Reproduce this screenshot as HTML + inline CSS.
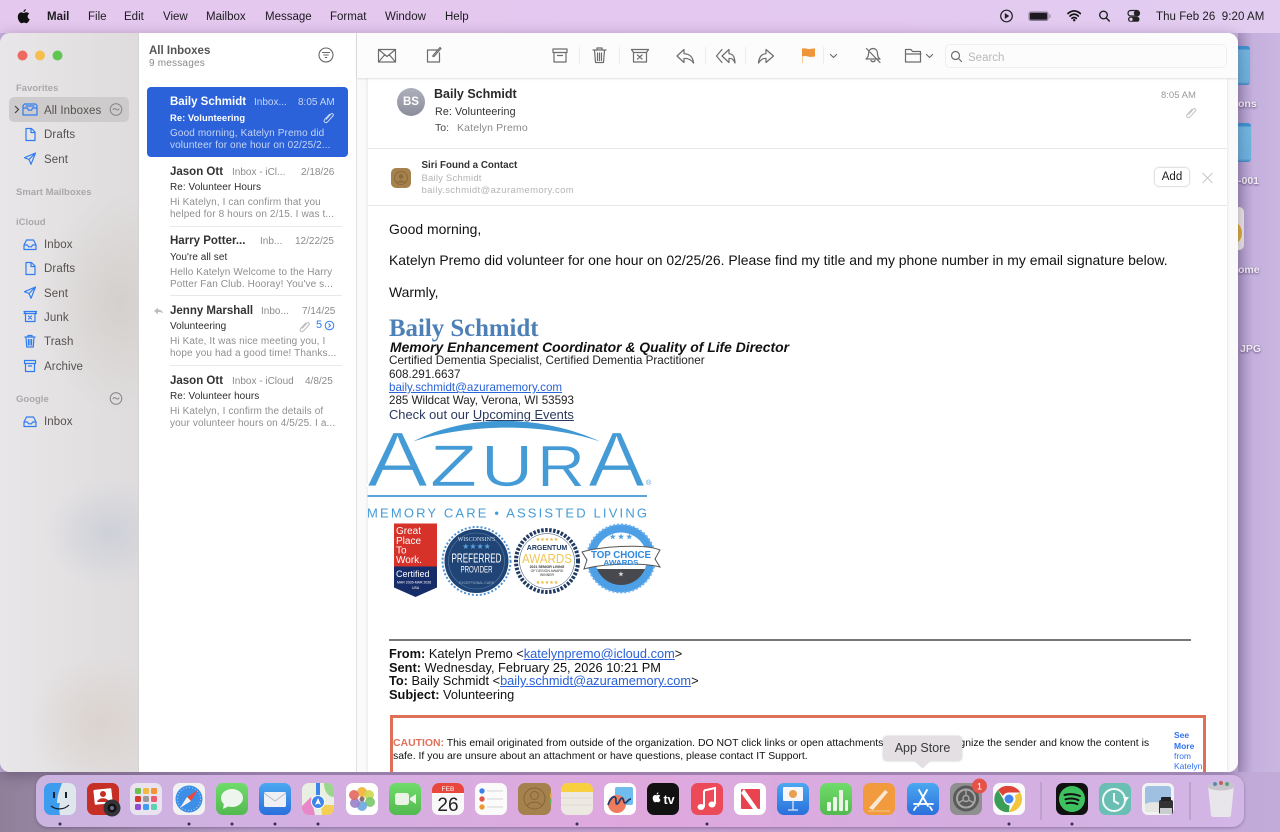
<!DOCTYPE html>
<html><head><meta charset="utf-8"><title>Mail</title>
<style>
html{background:#c8b3de}
html,body{margin:0;padding:0;width:1280px;height:832px;overflow:hidden;font-family:"Liberation Sans",sans-serif}
#root{position:absolute;left:0;top:0;width:1280px;height:832px;overflow:hidden;background:#c8b3de;filter:blur(.3px)}
.t{position:absolute;white-space:nowrap;line-height:14px;height:14px}
.abs{position:absolute}
svg{position:absolute;overflow:visible}
#menu .t{font-size:11.5px;color:#1c1a20;top:10px}
#side .t{font-size:11.5px;color:#55514f;left:44px;letter-spacing:.1px;margin-top:1px}
#side .h{font-size:9.5px;font-weight:bold;color:#aaa8a8;left:16px;letter-spacing:0}
.n{font-size:11.5px;font-weight:bold;color:#333;left:170px;margin-top:1px}
.b{font-size:10px;color:#8b8b8b;margin-top:2px}
.d{font-size:10px;color:#8b8b8b;margin-top:2px}
.s{font-size:10px;color:#2c2c2c;left:170px;letter-spacing:.05px;margin-top:3px}
.p{font-size:10px;color:#8f8f8f;left:170px;letter-spacing:.12px;margin-top:3px}
.sel{color:#fff}.sel2{color:#c5d5f5}
.m{color:#111}
a{color:#2a62d9;text-decoration:underline}
.sep{position:absolute;left:170px;width:172px;height:1px;background:#e8e8e8}
.side-i{fill:none;stroke:#2f7cf2;stroke-width:1.2;stroke-linejoin:round;stroke-linecap:round}
.tb{fill:none;stroke:#6c6c6c;stroke-width:1.2;stroke-linejoin:round;stroke-linecap:round}
.dl{position:absolute;color:#f0ecf4;font-size:10.5px;font-weight:bold;text-shadow:0 1px 2px rgba(60,40,80,.7);white-space:nowrap}
</style></head>
<body>
<div id="root">
<!-- wallpaper -->
<div class="abs" style="left:1238px;top:24px;width:42px;height:808px;background:linear-gradient(90deg,#a995c2,#c5b0dd 35%,#cbb6e2)"></div>
<div class="abs" style="left:0;top:772px;width:1280px;height:60px;background:linear-gradient(90deg,#8f8098,#b79dc8 20%,#c39fd0 60%,#c2abd8)"></div>
<!-- desktop icons -->
<div class="abs" style="left:1225px;top:46px;width:25px;height:39px;border-radius:3px;background:linear-gradient(#3f93cf 0 3px,#72b6e0 4px,#6cb1dc 92%,#3f86bf)"></div>
<div class="abs" style="left:1225px;top:123px;width:26px;height:39px;border-radius:3px;background:linear-gradient(#3f93cf 0 3px,#72b6e0 4px,#6cb1dc 92%,#3f86bf)"></div>
<div class="abs" style="left:1225px;top:207px;width:19px;height:43px;border-radius:5px;background:#ece8e6"></div>
<div class="abs" style="left:1225px;top:220px;width:17px;height:26px;border-radius:0 13px 13px 0;background:#dcae3e"></div>
<div class="dl" style="left:1238px;top:98px">ons</div>
<div class="dl" style="left:1238px;top:175px">-001</div>
<div class="dl" style="left:1238px;top:264px">ome</div>
<div class="dl" style="left:1240px;top:343px">JPG</div>
<!-- menu bar -->
<div id="menu" class="abs" style="left:0;top:0;width:1280px;height:33px;background:linear-gradient(90deg,#e5c8ee,#e3c8ef 70%,#e2cdf0)">
<svg style="left:17px;top:9px" width="13" height="15" viewBox="0 0 13 15"><path fill="#111" d="M9 .3C8.9 1.6 7.7 3 6.4 3 6.3 1.700 7.600.4 9 .3zM6.500 4c.7 0 1.600-.8 2.900-.8 1 0 2.100.5 2.800 1.500-2.300 1.400-2 4.500.5 5.600-.6 1.500-1.900 3.900-3.300 3.900-.9 0-1.300-.6-2.400-.6-1.100 0-1.600.6-2.400.6C2.900 14.200.8 10.900.8 8 .8 5 2.700 3.300 4.400 3.300c.9 0 1.600.7 2.100.7z"/></svg>
<div class="t" style="left:47px;font-weight:bold">Mail</div>
<div class="t" style="left:88px">File</div>
<div class="t" style="left:124px">Edit</div>
<div class="t" style="left:163px">View</div>
<div class="t" style="left:206px">Mailbox</div>
<div class="t" style="left:265px">Message</div>
<div class="t" style="left:330px">Format</div>
<div class="t" style="left:385px">Window</div>
<div class="t" style="left:445px">Help</div>
<svg style="left:0;top:0" width="1280" height="33">
<circle cx="1006.500" cy="16" r="5.800" fill="none" stroke="#222" stroke-width="1.200"/><path d="M1004.800 13v6l4.500-3z" fill="#222"/>
<rect x="1028.500" y="11.500" width="20" height="9.500" rx="2.500" fill="#8a7a96"/><rect x="1030" y="13" width="17" height="6.500" rx="1.300" fill="#1c1a20"/><rect x="1049.500" y="14.500" width="1" height="3.500" fill="#8a7a96"/>
<path d="M1068 13.500c3.800-3.400 8.500-3.400 12.300 0M1070 16c2.600-2.300 5.700-2.300 8.300 0M1072 18.300c1.400-1.100 2.900-1.100 4.300 0" fill="none" stroke="#111" stroke-width="1.700" stroke-linecap="round"/><circle cx="1074.200" cy="20.200" r="1.200" fill="#111"/>
<circle cx="1103.500" cy="15" r="3.800" fill="none" stroke="#222" stroke-width="1.400"/><path d="M1106.300 18l3 3" stroke="#222" stroke-width="1.500" stroke-linecap="round"/>
<rect x="1128" y="10.500" width="11.500" height="5.500" rx="2.700" fill="none" stroke="#222" stroke-width="1.200"/><circle cx="1136.500" cy="13.200" r="2.700" fill="#222"/>
<rect x="1128" y="16.800" width="11.500" height="5" rx="2.500" fill="#222"/><circle cx="1131" cy="19.300" r="1.700" fill="#e3c9ee"/>
</svg>
<div class="t" style="left:1156px;letter-spacing:.05px">Thu Feb 26&nbsp;&nbsp;9:20 AM</div>
</div>
<!-- window -->
<div class="abs" style="left:0;top:33px;width:1238px;height:739px;border-radius:10px;overflow:hidden;background:#fff;box-shadow:0 3px 14px rgba(40,20,60,.35)">
 <div style="position:absolute;left:0;top:0;right:0;bottom:0;transform:translateY(-33px)">
 <!-- sidebar -->
 <div class="abs" style="left:0;top:33px;width:138px;height:739px;background:radial-gradient(ellipse 65px 55px at 110px 500px,#ced1d8 0,rgba(206,209,216,0) 100%),radial-gradient(ellipse 70px 70px at 100px 690px,#dad3ce 0,rgba(218,211,206,0) 100%),radial-gradient(ellipse 80px 110px at 120px 270px,#d4d0cd 0,rgba(212,208,205,0) 100%),linear-gradient(90deg,#e8e6e8,#dfdcdd)"></div>
 <div id="side" class="abs" style="left:0;top:0;width:138px;height:772px">
  <div class="abs" style="left:9px;top:97px;width:120px;height:25px;border-radius:5px;background:#cdcbcb"></div>
  <svg style="left:0;top:0" width="138" height="500">
   <circle cx="22.500" cy="55.500" r="5" fill="#ec6a5e"/><circle cx="40" cy="55.500" r="5" fill="#f4bf4f"/><circle cx="57.500" cy="55.500" r="5" fill="#61c554"/>
   <path d="M15 106l3.500 3.500-3.500 3.500" fill="none" stroke="#444" stroke-width="1.200"/>
   <g class="side-i">
    <path d="M24.500 104h11l1.500 1.500v9.500h-14v-9.500zM24 108h3.500l1 2.200h3l1-2.200h4M26 106h8"/>
    <path d="M26 128.500h5.500l3.500 3.500v8.500h-9zM31 128.500v4h4"/>
    <path d="M35.500 153l-11 4.700 4.500 1.800 2 4.800zM29 159.500l6.500-6.500"/>
    <path d="M24 245l2.500-5h7l2.500 5v4.500h-12zM24 245h3.500l1 1.800h3l1-1.800H36"/>
    <path d="M26 262.500h5.500l3.500 3.500v8.500h-9zM31 262.500v4h4"/>
    <path d="M35.500 287l-11 4.700 4.500 1.800 2 4.800zM29 293.500l6.500-6.500"/>
    <path d="M24 311.500h12.500l-1.500 2v8h-9.500v-8zM28.500 316l3 3M31.500 316l-3 3M24 313.500h12.500"/>
    <path d="M25 337h10M28 337v-1.500h4V337M26 337l.700 10h6.600l.700-10M28.400 339.500v5.500M30 339.500v5.500M31.600 339.500v5.500"/>
    <path d="M24.500 360.500h11v3h-11zM25.500 363.500v8h9v-8M28.500 366h3"/>
    <path d="M24 422l2.500-5h7l2.500 5v4.500h-12zM24 422h3.500l1 1.800h3l1-1.800H36"/>
   </g>
   <g fill="none" stroke="#8d8b8b" stroke-width="1.100">
    <circle cx="116" cy="109.500" r="5.800"/><path d="M112.800 110c1-1.800 2-1.800 3.200-.7s2.200 1 3.200-.6"/>
    <circle cx="116" cy="398.500" r="5.800"/><path d="M112.800 399c1-1.800 2-1.800 3.200-.7s2.200 1 3.200-.6"/>
   </g>
  </svg>
  <div class="t h" style="top:81px">Favorites</div>
  <div class="t" style="top:103px">All Inboxes</div>
  <div class="t" style="top:127px">Drafts</div>
  <div class="t" style="top:152px">Sent</div>
  <div class="t h" style="top:185px">Smart Mailboxes</div>
  <div class="t h" style="top:215px">iCloud</div>
  <div class="t" style="top:237px">Inbox</div>
  <div class="t" style="top:261px">Drafts</div>
  <div class="t" style="top:286px">Sent</div>
  <div class="t" style="top:310px">Junk</div>
  <div class="t" style="top:334px">Trash</div>
  <div class="t" style="top:359px">Archive</div>
  <div class="t h" style="top:392px">Google</div>
  <div class="t" style="top:414px">Inbox</div>
 </div>
 <!-- list -->
 <div class="abs" style="left:138px;top:33px;width:219px;height:739px;background:#fff;border-left:1px solid #d4d2d2;border-right:1px solid #e2e2e2;box-sizing:border-box"></div>
 <div class="t" style="left:149px;top:44px;font-size:11.500px;font-weight:bold;color:#555">All Inboxes</div>
 <div class="t" style="left:149px;top:57px;font-size:10px;color:#8a8a8a;letter-spacing:.2px">9 messages</div>
 <svg style="left:0;top:0" width="360" height="60"><circle cx="326" cy="55" r="7" fill="none" stroke="#666" stroke-width="1.100"/><path d="M322 52.500h8M323.300 55h5.400M324.800 57.500h2.400" stroke="#666" stroke-width="1.100"/></svg>
 <div class="abs" style="left:147px;top:87px;width:200.500px;height:69.500px;border-radius:4px;background:#2b62d9"></div>
 <div class="t n sel" style="top:94px">Baily Schmidt</div>
 <div class="t b sel2" style="left:254px;top:94px">Inbox...</div>
 <div class="t d sel2" style="left:298px;top:94px">8:05 AM</div>
 <div class="t s sel" style="top:108px;font-weight:bold;font-size:9.400px">Re: Volunteering</div>
 <div class="t p sel2" style="top:124px">Good morning, Katelyn Premo did</div>
 <div class="t p sel2" style="top:136px">volunteer for one hour on 02/25/2...</div>
 <svg style="left:0;top:0" width="360" height="360"><g fill="none" stroke-width="1"><path stroke="#c5d5f5" d="M326 119.500l5-5.500c1.300-1.300 3.200.5 2 1.900l-5.500 6c-2 2-4.600-.5-2.700-2.600l5-5.300"/><path stroke="#bbb" d="M302 328.500l5-5.500c1.300-1.300 3.200.5 2 1.900l-5.500 6c-2 2-4.600-.5-2.700-2.600l5-5.300"/></g>
 <path d="M154 311l4-3.200v2c3 0 4.500 1.200 5 3.700-1.300-1.300-2.800-1.600-5-1.500v2.200z" fill="#bdbdbd"/>
 <circle cx="329.500" cy="325.500" r="4.300" fill="none" stroke="#2f7cf2"/><path d="M328.500 323.500l2 2-2 2" fill="none" stroke="#2f7cf2"/></svg>

 <div class="t n" style="top:164px">Jason Ott</div>
 <div class="t b" style="left:232px;top:164px">Inbox - iCl...</div>
 <div class="t d" style="left:301px;top:164px">2/18/26</div>
 <div class="t s" style="top:178px">Re: Volunteer Hours</div>
 <div class="t p" style="top:193px">Hi Katelyn, I can confirm that you</div>
 <div class="t p" style="top:205px">helped for 8 hours on 2/15. I was t...</div>
 <div class="sep" style="top:226px"></div>

 <div class="t n" style="top:233px">Harry Potter...</div>
 <div class="t b" style="left:260px;top:233px">Inb...</div>
 <div class="t d" style="left:295px;top:233px">12/22/25</div>
 <div class="t s" style="top:248px">You're all set</div>
 <div class="t p" style="top:263px">Hello Katelyn Welcome to the Harry</div>
 <div class="t p" style="top:275px">Potter Fan Club. Hooray! You've s...</div>
 <div class="sep" style="top:295px"></div>

 <div class="t n" style="top:303px">Jenny Marshall</div>
 <div class="t b" style="left:261px;top:303px">Inbo...</div>
 <div class="t d" style="left:302px;top:303px">7/14/25</div>
 <div class="t s" style="top:317px">Volunteering</div>
 <div class="t" style="left:316px;top:318px;font-size:11px;color:#2f7cf2">5</div>
 <div class="t p" style="top:332px">Hi Kate, It was nice meeting you, I</div>
 <div class="t p" style="top:344px">hope you had a good time! Thanks...</div>
 <div class="sep" style="top:365px"></div>

 <div class="t n" style="top:373px">Jason Ott</div>
 <div class="t b" style="left:232px;top:373px">Inbox - iCloud</div>
 <div class="t d" style="left:305px;top:373px">4/8/25</div>
 <div class="t s" style="top:387px">Re: Volunteer hours</div>
 <div class="t p" style="top:402px">Hi Katelyn, I confirm the details of</div>
 <div class="t p" style="top:414px">your volunteer hours on 4/5/25. I a...</div>

 <!-- message pane -->
 <div class="abs" style="left:357px;top:78px;width:881px;height:694px;background:#fafafa"></div>
 <div class="abs" style="left:368px;top:78px;width:859px;height:694px;background:#fff;box-shadow:0 0 3px rgba(0,0,0,.12)"></div>
 <div class="abs" style="left:357px;top:33px;width:881px;height:45px;background:#fcfcfc;box-shadow:0 1px 2px rgba(0,0,0,.12)"></div>
 <div class="abs" style="left:945px;top:44px;width:282px;height:24px;box-sizing:border-box;border:1px solid #efefef;border-radius:5px;background:#fcfcfc"></div>
 <svg style="left:0;top:0" width="1238" height="80">
  <g class="tb">
   <path d="M378.500 49.500h17v12.500h-17zM378.500 49.500l8.500 7 8.500-7M378.500 62l6-7M395.500 62l-6-7"/>
   <path d="M437.500 50h-10v12h12v-9M433 56.500l1 0 7-8-1-1-7 8z"/>
   <path d="M553 49h14v3.500h-14zM554 52.500V62h12v-9.500M557.500 55.500h5"/>
   <path d="M593 50h13M597 50v-2h5v2M594.500 50l1 12.500h8l1-12.500M597.500 53v7.500M599.500 53v7.500M601.500 53v7.500"/>
   <path d="M631.500 49.500h17l-2 3v9.500h-13v-9.500zM633.500 52.500h13M637.500 55l4.500 4M642 55l-4.500 4"/>
   <path d="M684 49.500l-7 6.500 7 6.500v-4c4-.3 7 .7 9.500 4.500-.5-5.500-3.500-9-9.500-9.300z"/>
   <path d="M722 49.500l-5.500 6.500 5.500 6.500M729 49.500l-7 6.500 7 6.500v-4c3-.3 4.500.7 6 4.500-.3-5.500-1.500-9-6-9.300z"/>
   <path d="M766 49.500l7.500 6.500-7.500 6.500v-4c-3-.3-5 .7-7.500 4.500.5-5.500 2.500-9 7.500-9.300z"/>
   <path d="M830.500 54.500l3 3 3-3M926.500 54.500l3 3 3-3"/>
   <path d="M873 48.500c-3 0-4.500 2.500-4.500 5 0 3-1 4.500-2.500 5.500h14c-1.500-1-2.500-2.500-2.500-5.500 0-2.500-1.500-5-4.500-5zM871 60.500c.5 1.500 3.500 1.500 4 0M866.500 48.500l13.500 14"/>
   <path d="M905.500 62V49.500h5.500l1.500 2h8V62zM905.500 54h15.500"/>
   <circle cx="955.500" cy="55.500" r="4"/><path d="M958.500 58.500l3 3"/>
  </g>
  <path d="M802 48.500c3-1 6 1 8 .5 1.500-.3 3-.5 5-.5v8c-3 .5-5 .6-7 0-2-.6-4-.8-5.500-.2V63H802z" fill="#f0963a"/>
  <g stroke="#ececec"><path d="M579.500 47v17M619.500 47v17M705.500 47v17M745.500 47v17M823.500 47v17"/></g>
 </svg>
 <div class="t" style="left:968px;top:51px;font-size:11.500px;color:#b9b9b9">Search</div>

 <div class="abs" style="left:397px;top:88px;width:28px;height:28px;border-radius:50%;background:linear-gradient(#aeb0bb,#8b8d9b);color:#fff;font-weight:bold;font-size:11.500px;line-height:28px;text-align:center">BS</div>
 <div class="t" style="left:434px;top:87px;font-size:12.500px;font-weight:bold;color:#2a2a2a">Baily Schmidt</div>
 <div class="t" style="left:435px;top:105px;font-size:10.700px;color:#333;letter-spacing:.1px">Re: Volunteering</div>
 <div class="t" style="left:435px;top:121px;font-size:10.500px;color:#444">To:</div>
 <div class="t" style="left:457px;top:121px;font-size:10.500px;color:#8a8a8a;letter-spacing:.15px">Katelyn Premo</div>
 <div class="t" style="left:1161px;top:89px;font-size:9.500px;color:#999">8:05 AM</div>
 <svg style="left:0;top:0" width="1238" height="210"><path fill="none" stroke="#c4c4c4" d="M1188.500 114.500l5-5.500c1.300-1.300 3.200.5 2 1.900l-5.500 6c-2 2-4.600-.5-2.700-2.600l5-5.300"/>
  <path d="M1202.500 173l10 10M1212.500 173l-10 10" stroke="#c8c8c8" stroke-width="1"/></svg>
 <div class="abs" style="left:368px;top:148px;width:859px;height:1px;background:#e6e6e6"></div>
 <div class="abs" style="left:368px;top:205px;width:859px;height:1px;background:#e6e6e6"></div>
 <div class="abs" style="left:391px;top:168px;width:20px;height:20px;border-radius:5px;background:#a5814d"></div>
 <svg style="left:0;top:0" width="420" height="200"><circle cx="401" cy="178" r="6.500" fill="none" stroke="#8a6a3c"/><circle cx="401" cy="176.500" r="2.200" fill="#8a6a3c"/><path d="M396.500 182.500c2-2.500 7-2.500 9 0" fill="#8a6a3c"/></svg>
 <div class="t" style="left:421.500px;top:159px;font-size:9.800px;font-weight:bold;color:#333">Siri Found a Contact</div>
 <div class="t" style="left:421.500px;top:172px;font-size:9.500px;color:#b4b4b4;letter-spacing:.2px">Baily Schmidt</div>
 <div class="t" style="left:421.500px;top:184px;font-size:9.500px;color:#b4b4b4;letter-spacing:.37px">baily.schmidt@azuramemory.com</div>
 <div class="abs" style="left:1155px;top:168px;width:34px;height:18px;border-radius:4px;background:#fff;box-shadow:0 0 2px rgba(0,0,0,.35);font-size:11.500px;line-height:18px;text-align:center;color:#222">Add</div>

 <!-- body -->
 <div class="t m" style="left:389px;top:222px;font-size:13.950px">Good morning,</div>
 <div class="t m" style="left:389px;top:253px;font-size:13.950px">Katelyn Premo did volunteer for one hour on 02/25/26. Please find my title and my phone number in my email signature below.</div>
 <div class="t m" style="left:389px;top:285px;font-size:13.950px">Warmly,</div>
 <div class="t" style="left:389px;top:322px;font-family:'Liberation Serif',serif;font-weight:bold;font-size:24.800px;color:#4d80b6">Baily Schmidt</div>
 <div class="t m" style="left:390px;top:340px;font-size:13.900px;font-weight:bold;font-style:italic">Memory Enhancement Coordinator &amp; Quality of Life Director</div>
 <div class="t m" style="left:389px;top:354px;font-size:11.700px;color:#222">Certified Dementia Specialist, Certified Dementia Practitioner</div>
 <div class="t m" style="left:389px;top:368px;font-size:11.700px;color:#222">608.291.6637</div>
 <div class="t" style="left:389px;top:381px;font-size:11.600px"><a>baily.schmidt@azuramemory.com</a></div>
 <div class="t m" style="left:389px;top:394px;font-size:11.600px;color:#222">285 Wildcat Way, Verona, WI 53593</div>
 <div class="t" style="left:389px;top:408px;font-size:12.900px;color:#2b3a5e">Check out our <span style="text-decoration:underline">Upcoming Events</span></div>

 <svg style="left:0;top:0" width="700" height="610">
  <path d="M413 441.500C470 412 545 416 600 441.500 545 423 470 423 413 441.500z" fill="#3f97d3"/>
  <g fill="#459bd6" font-family="'Liberation Sans',sans-serif">
   <g stroke="#fff" stroke-width="1.300">
   <text x="367" y="486" font-size="78" textLength="61" lengthAdjust="spacingAndGlyphs">A</text>
   <text x="588" y="486" font-size="78" textLength="57" lengthAdjust="spacingAndGlyphs">A</text>
   </g>
   <g stroke="#fff" stroke-width=".6">
   <text x="430" y="486" font-size="58" textLength="47" lengthAdjust="spacingAndGlyphs">Z</text>
   <text x="481" y="486" font-size="58" textLength="52" lengthAdjust="spacingAndGlyphs">U</text>
   <text x="537" y="486" font-size="58" textLength="48" lengthAdjust="spacingAndGlyphs">R</text>
   </g>
   <text x="646" y="485" font-size="7">®</text>
   <text x="367" y="517.500" font-size="13" textLength="280">MEMORY CARE  •  ASSISTED LIVING</text>
  </g>
  <rect x="367.500" y="495" width="279.500" height="2" fill="#5aa6dc"/>
  <!-- Great place -->
  <path d="M394 523.500h43v43h-43z" fill="#d6322a"/>
  <path d="M394 566.500h43v21l-21.500 9.500-21.500-9.500z" fill="#172d6a"/>
  <g fill="#fff" font-family="'Liberation Sans',sans-serif">
   <g font-size="10"><text x="396" y="534">Great</text><text x="396" y="544">Place</text><text x="396" y="553.500">To</text><text x="396" y="563">Work.</text></g>
   <text x="396" y="577" font-size="9">Certified</text>
   <text x="397" y="583.500" font-size="3.500">MAR 2026-MAR 2026</text>
   <text x="412" y="589" font-size="3.500">USA</text>
  </g>
  <!-- Preferred -->
  <circle cx="476.500" cy="561" r="34" fill="none" stroke="#4f93d3" stroke-width="2" stroke-dasharray="2 2"/>
  <circle cx="476.500" cy="561" r="32" fill="#1f4475"/>
  <circle cx="476.500" cy="561" r="28" fill="none" stroke="#5a80ad" stroke-width=".6"/>
  <g font-family="'Liberation Sans',sans-serif" text-anchor="middle" fill="#fff">
   <text x="476.500" y="541" font-size="6" font-family="'Liberation Serif',serif" fill="#d8e3ef">WISCONSIN'S</text>
   <text x="476.500" y="549" font-size="8" fill="#5aa0de">★★★★</text>
   <text x="476.500" y="562.500" font-size="13" textLength="50" lengthAdjust="spacingAndGlyphs">PREFERRED</text>
   <text x="476.500" y="572.500" font-size="9.500" textLength="32" lengthAdjust="spacingAndGlyphs">PROVIDER</text>
   <text x="476.500" y="584" font-size="3.500" fill="#9fb5cf">EXCEPTIONAL CARE</text>
  </g>
  <!-- Argentum -->
  <circle cx="547" cy="561" r="31" fill="#fff" stroke="#1f3a63" stroke-width="4" stroke-dasharray="2.500 1.500"/>
  <circle cx="547" cy="561" r="27.500" fill="#fff" stroke="#1f3a63" stroke-width=".5"/>
  <g font-family="'Liberation Sans',sans-serif" text-anchor="middle">
   <text x="547" y="541" font-size="5" fill="#e5b73b">★★★★★</text>
   <text x="547" y="550" font-size="7" font-weight="bold" fill="#1f3a63">ARGENTUM</text>
   <text x="547" y="563" font-size="12.500" fill="#eec654" textLength="50" lengthAdjust="spacingAndGlyphs">AWARDS</text>
   <text x="547" y="568" font-size="3.500" fill="#333" font-weight="bold">2021 SENIOR LIVING</text>
   <text x="547" y="572" font-size="3.500" fill="#333">OF DESIGN AWARD</text>
   <text x="547" y="576" font-size="3.500" fill="#333">WINNER</text>
   <text x="547" y="584" font-size="5" fill="#e5b73b">★★★★★</text>
  </g>
  <!-- Top choice -->
  <circle cx="621" cy="558.500" r="34" fill="#4d9fe6" stroke="#6eb2ee" stroke-width="2" stroke-dasharray="2 2"/>
  <circle cx="621" cy="558.500" r="26" fill="#fff"/>
  <path d="M597 569a26 26 0 0 0 48 0z" fill="#47494f"/>
  <path d="M582 552c14-5 62-9 78-2l-5 9 5 8c-18-5-60-3-76 2l3-9z" fill="#fff" stroke="#555" stroke-width="1"/>
  <g font-family="'Liberation Sans',sans-serif" text-anchor="middle" font-weight="bold" fill="#2e8ae0">
   <text x="621" y="558" font-size="10.500" textLength="60" lengthAdjust="spacingAndGlyphs">TOP CHOICE</text>
   <text x="621" y="565" font-size="7" textLength="35" lengthAdjust="spacingAndGlyphs">AWARDS</text>
   <text x="621" y="539" font-size="7" fill="#4d9fe6">★ ★ ★</text>
   <text x="621" y="576" font-size="6" fill="#ddd">★</text>
  </g>
 </svg>

 <div class="abs" style="left:389px;top:639px;width:802px;height:1.500px;background:#777"></div>
 <div class="t m" style="left:389px;top:647px;font-size:12.800px"><b>From:</b> Katelyn Premo &lt;<a>katelynpremo@icloud.com</a>&gt;</div>
 <div class="t m" style="left:389px;top:661px;font-size:12.800px"><b>Sent:</b> Wednesday, February 25, 2026 10:21 PM</div>
 <div class="t m" style="left:389px;top:674px;font-size:12.800px"><b>To:</b> Baily Schmidt &lt;<a>baily.schmidt@azuramemory.com</a>&gt;</div>
 <div class="t m" style="left:389px;top:688px;font-size:12.800px"><b>Subject:</b> Volunteering</div>

 <div class="abs" style="left:390px;top:715px;width:816px;height:80px;box-sizing:border-box;border:3px solid #df7058"></div>
 <div class="t m" style="left:393px;top:737px;font-size:10.450px"><b style="color:#e2705a">CAUTION:</b> This email originated from outside of the organization. DO NOT click links or open attachments unless you recognize the sender and know the content is</div>
 <div class="t m" style="left:393px;top:750px;font-size:10.450px">safe. If you are unsure about an attachment or have questions, please contact IT Support.</div>
 <div class="t" style="left:1174px;top:728px;font-size:8.500px;font-weight:bold;color:#2f74ee">See</div>
 <div class="t" style="left:1174px;top:738.500px;font-size:8.500px;font-weight:bold;color:#2f74ee">More</div>
 <div class="t" style="left:1174px;top:749px;font-size:8.500px;color:#2f74ee">from</div>
 <div class="t" style="left:1174px;top:759px;font-size:8.500px;color:#2f74ee">Katelyn</div>
 </div>
</div>

<!-- tooltip -->
<div class="abs" style="left:883px;top:736px;width:79px;height:25px;border-radius:4px;background:#e3dfe3;box-shadow:0 0 2px rgba(0,0,0,.2);font-size:12.500px;line-height:25px;text-align:center;color:#3a3a3a">App Store</div>
<svg style="left:914px;top:761px" width="18" height="8"><path d="M0 0h17L8.500 7.500z" fill="#e3dfe3"/></svg>

<!-- dock -->
<div class="abs" style="left:36px;top:775px;width:1208px;height:52px;border-radius:12px;background:linear-gradient(90deg,#cbb4e0,#d5afe2 25%,#dfa8dd 50%,#d5ade0 75%,#d2b6e6);box-shadow:0 1px 3px rgba(60,30,80,.35)"></div>
<svg style="left:0;top:0" width="1280" height="832">
 <defs>
  <linearGradient id="gB" x1="0" y1="0" x2="0" y2="1"><stop offset="0" stop-color="#4aa8f0"/><stop offset="1" stop-color="#2a6fdc"/></linearGradient>
  <linearGradient id="gG" x1="0" y1="0" x2="0" y2="1"><stop offset="0" stop-color="#6fdc6a"/><stop offset="1" stop-color="#52b94f"/></linearGradient>
 </defs>
 <g transform="translate(44,783)"><rect width="32" height="32" rx="7" fill="#3d9cee"/><path d="M18 0h7a7 7 0 0 1 7 7v18a7 7 0 0 1-7 7h-9c-1-5-1-9 0-12h-3c0-8 3-14 5-20z" fill="#dfe6ec"/><rect x="9" y="9" width="2" height="6" fill="#123"/><rect x="21" y="9" width="2" height="6" fill="#123"/><path d="M7 23c5 4 13 4 18-1" fill="none" stroke="#123" stroke-width="1.200"/></g>
 <g transform="translate(87,783)"><rect width="32" height="32" rx="7" fill="#c62f25"/><rect x="7" y="6" width="18" height="15" rx="1" fill="#fff" transform="rotate(-6 16 13)"/><circle cx="16" cy="11" r="3" fill="#c62f25"/><path d="M10 19c1-5 11-5 12 0z" fill="#c62f25"/><circle cx="25" cy="25" r="8.500" fill="#33333a"/><circle cx="25" cy="25" r="4.500" fill="#111"/><circle cx="25" cy="25" r="2" fill="#6a6f88"/></g>
 <g transform="translate(130,783)"><rect width="32" height="32" rx="7" fill="#e9e3ef"/><g><rect x="5" y="5" width="6" height="6" rx="1.500" fill="#6bc04f"/><rect x="13" y="5" width="6" height="6" rx="1.500" fill="#f3b93d"/><rect x="21" y="5" width="6" height="6" rx="1.500" fill="#f09436"/><rect x="5" y="13" width="6" height="6" rx="1.500" fill="#d8352b"/><rect x="13" y="13" width="6" height="6" rx="1.500" fill="#999"/><rect x="21" y="13" width="6" height="6" rx="1.500" fill="#ee5a6c"/><rect x="5" y="21" width="6" height="6" rx="1.500" fill="#8f4fd0"/><rect x="13" y="21" width="6" height="6" rx="1.500" fill="#3f9cf0"/><rect x="21" y="21" width="6" height="6" rx="1.500" fill="#5fd0b0"/></g></g>
 <g transform="translate(173,783)"><rect width="32" height="32" rx="7" fill="#f2f2f2"/><circle cx="16" cy="16" r="13.500" fill="#3c8ee6"/><circle cx="16" cy="16" r="11.500" fill="none" stroke="#a8cdf2" stroke-width="1" stroke-dasharray="1 2"/><path d="M25 7l-11 7 4 4z" fill="#ea4a3a"/><path d="M7 25l7-11 4 4z" fill="#f2f2f2"/></g>
 <g transform="translate(216,783)"><rect width="32" height="32" rx="7" fill="url(#gG)"/><ellipse cx="16" cy="15" rx="11" ry="9" fill="#eef5ec"/><path d="M8 20l-1 6 6-3z" fill="#eef5ec"/></g>
 <g transform="translate(259,783)"><rect width="32" height="32" rx="7" fill="url(#gB)"/><rect x="5" y="9" width="22" height="15" rx="1.500" fill="#eef0f4"/><path d="M5 10l11 8 11-8" fill="none" stroke="#b5bcc8" stroke-width="1"/></g>
 <g transform="translate(302,783)"><rect width="32" height="32" rx="7" fill="#e9f0e2"/><path d="M0 23l9-9 4 18H7a7 7 0 0 1-7-7z" fill="#e887c7"/><path d="M19 22h13v3a7 7 0 0 1-7 7h-5z" fill="#f3cf57"/><path d="M22 0h3a7 7 0 0 1 7 7v7c-6 0-10-6-10-14z" fill="#9bd68e"/><rect x="14" y="0" width="4" height="14" fill="#3c86ea"/><circle cx="16" cy="19" r="6.500" fill="#3c86ea" stroke="#fff"/><path d="M16 15l3 7-3-1.500-3 1.500z" fill="#fff"/></g>
 <g transform="translate(346,783)"><rect width="32" height="32" rx="7" fill="#fff"/><circle cx="16" cy="9" r="5" fill="#f2b94a"/><circle cx="23" cy="12" r="5" fill="#cfd64e" opacity=".9"/><circle cx="24" cy="19" r="5" fill="#79c66a" opacity=".9"/><circle cx="16" cy="23" r="5" fill="#6aa7dc" opacity=".9"/><circle cx="9" cy="20" r="5" fill="#9a7fc8" opacity=".9"/><circle cx="8" cy="12" r="5" fill="#e2685e" opacity=".9"/><circle cx="16" cy="16" r="2.500" fill="#8a7068"/></g>
 <g transform="translate(389,783)"><rect width="32" height="32" rx="7" fill="url(#gG)"/><rect x="6" y="10" width="14" height="12" rx="2.500" fill="#e9f3e6"/><path d="M21 15l6-4v10l-6-4z" fill="#e9f3e6"/></g>
 <g transform="translate(432,783)"><rect width="32" height="32" rx="7" fill="#f8f8f8"/><path d="M0 10V7a7 7 0 0 1 7-7h18a7 7 0 0 1 7 7v3z" fill="#e7473c"/><text x="16" y="8" text-anchor="middle" font-size="6.500" fill="#fff" font-family="'Liberation Sans',sans-serif">FEB</text><text x="16" y="28" text-anchor="middle" font-size="19" fill="#222" font-family="'Liberation Sans',sans-serif">26</text></g>
 <g transform="translate(475,783)"><rect width="32" height="32" rx="7" fill="#fbfbfb"/><circle cx="7" cy="8" r="2.700" fill="#3f80ee"/><circle cx="7" cy="16" r="2.700" fill="#e2564a"/><circle cx="7" cy="24" r="2.700" fill="#eb9a36"/><path d="M12 8h16M12 16h16M12 24h16" stroke="#d5d5d5" stroke-width="1"/></g>
 <g transform="translate(518,783)"><rect x="0" width="33" height="32" rx="7" fill="#a5814d"/><rect x="32" y="10" width="1.500" height="5" fill="#e8a33b"/><rect x="32" y="16" width="1.500" height="5" fill="#6cb85a"/><circle cx="16.500" cy="15.500" r="10.500" fill="none" stroke="#866639" stroke-width="1"/><circle cx="16.500" cy="12.500" r="4" fill="none" stroke="#866639" stroke-width="1"/><path d="M9 23c3-5 12-5 15 0" fill="none" stroke="#866639"/></g>
 <g transform="translate(561,783)"><rect width="32" height="32" rx="7" fill="#ece9e2"/><path d="M0 9V7a7 7 0 0 1 7-7h18a7 7 0 0 1 7 7v2z" fill="#f8cf3f"/><path d="M0 15h32M0 22h32" stroke="#dcd8ce" stroke-width=".8"/></g>
 <g transform="translate(604,783)"><rect width="32" height="32" rx="7" fill="#fff"/><rect x="11" y="4" width="18" height="18" rx="2" fill="#6fbcef"/><circle cx="13" cy="21" r="9" fill="#ee7b5e"/><path d="M4 22c2-6 5-9 7-8 2 1 0 7 2 7s3-6 5-6 1 5 3 5 3-4 6-4" fill="none" stroke="#1c3d6e" stroke-width="1.700"/></g>
 <g transform="translate(647,783)"><rect width="32" height="32" rx="7" fill="#111"/><text x="22" y="21" text-anchor="middle" font-size="12.500" font-weight="bold" fill="#fff" font-family="'Liberation Sans',sans-serif">tv</text><path fill="#fff" d="M9.500 11.500c0-1 .8-2 1.900-2.100.1 1.100-.8 2.200-1.900 2.100zM9.400 12.400c.5 0 1.100-.5 2-.5.7 0 1.400.3 1.900 1-1.600 1-1.400 3.100.3 3.800-.4 1-1.300 2.600-2.200 2.600-.6 0-.9-.4-1.600-.4s-1.100.4-1.600.4c-1.100 0-2.500-2.200-2.500-4.200 0-2 1.300-3.100 2.400-3.100.6 0 1 .4 1.300.4z"/></g>
 <g transform="translate(691,783)"><rect width="32" height="32" rx="7" fill="#ec4a58"/><path d="M13 7.500l11-2.500v16" fill="none" stroke="#fff" stroke-width="2"/><path d="M13 7.500V24" stroke="#fff" stroke-width="2"/><ellipse cx="10" cy="24" rx="3.500" ry="3" fill="#fff"/><ellipse cx="21" cy="21.500" rx="3.500" ry="3" fill="#fff"/></g>
 <g transform="translate(734,783)"><rect width="32" height="32" rx="7" fill="#fff"/><rect x="7" y="6" width="19" height="20" rx="1" fill="#e8434f"/><path d="M10 6l14 20h-5L7 10z" fill="#fff"/></g>
 <g transform="translate(777,783)"><rect width="32" height="32" rx="7" fill="url(#gB)"/><rect x="6" y="4" width="20" height="14" rx="1" fill="#f4f6fa"/><circle cx="16" cy="11" r="4" fill="#e8a050"/><path d="M16 18v9M11 27h10" stroke="#e0e6f0" stroke-width="1.300"/></g>
 <g transform="translate(820,783)"><rect width="32" height="32" rx="7" fill="url(#gG)"/><rect x="7" y="19" width="4" height="9" rx="1" fill="#eaf6e6"/><rect x="13" y="14" width="4" height="14" rx="1" fill="#eaf6e6"/><rect x="19" y="7" width="4" height="21" rx="1" fill="#eaf6e6"/><rect x="25" y="17" width="3" height="11" rx="1" fill="#eaf6e6"/></g>
 <g transform="translate(863,783)"><rect width="32" height="32" rx="7" fill="#f19a3e"/><path d="M6 25L22 7l3 2-15 18z" fill="#f7e9d3"/><path d="M5 28h22" stroke="#f9c98f" stroke-width="1"/></g>
 <g transform="translate(907,783)"><rect width="32" height="32" rx="7" fill="url(#gB)"/><path d="M12 7l9 16M20 7l-9 16M7 21h19M23 24l2 3M9 24l-2 3" fill="none" stroke="#fff" stroke-width="1.800" stroke-linecap="round"/></g>
 <g transform="translate(950,783)"><rect width="32" height="32" rx="7" fill="#8f8f8f"/><circle cx="16" cy="15.500" r="13" fill="#5a5a5a"/><circle cx="16" cy="15.500" r="9" fill="none" stroke="#a5a5a5" stroke-width="2"/><circle cx="16" cy="15.500" r="3" fill="none" stroke="#a5a5a5" stroke-width="1.500"/><path d="M16 12.500V6.500M13.500 17l-5.500 3M18.500 17l5.500 3" stroke="#a5a5a5" stroke-width="1.500"/></g>
 <g transform="translate(979.500,786)"><circle r="7.500" fill="#e5524a"/><text y="3.300" text-anchor="middle" font-size="9" fill="#fff" font-family="'Liberation Sans',sans-serif">1</text></g>
 <g transform="translate(993,783)"><rect width="32" height="32" rx="7" fill="#fbfbfb"/><path d="M16 3a13 13 0 0 1 11.300 6.500H16a6.500 6.500 0 0 0-6 3.500L5 7a13 13 0 0 1 11-4z" fill="#de4438"/><path d="M27.300 9.500A13 13 0 0 1 16 29l5.600-9.800a6.500 6.500 0 0 0 0-6.500z" fill="#f2c53a"/><path d="M16 29A13 13 0 0 1 5 7l5.600 9.800a6.500 6.500 0 0 0 6 5.600z" fill="#3c9e56"/><circle cx="16" cy="16" r="5" fill="#4385ea" stroke="#fff" stroke-width="1"/></g>
 <path d="M1041 782v38M1190 782v38" stroke="#a890b8" stroke-width="1"/>
 <g transform="translate(1056,783)"><rect width="32" height="32" rx="7" fill="#111"/><circle cx="16" cy="16" r="13" fill="#3ec25f"/><path d="M8.500 12c5-1.500 10-1.200 15.500 1M9.500 16.300c4.500-1.200 9-1 13 1M10.500 20.300c4-1 7.500-.8 11 .8" fill="none" stroke="#111" stroke-width="2" stroke-linecap="round"/></g>
 <g transform="translate(1099,783)"><rect width="32" height="32" rx="7" fill="#69bfb4"/><circle cx="15" cy="17" r="11" fill="none" stroke="#f4faf7" stroke-width="2"/><path d="M15 10v8l5 3" fill="none" stroke="#f4faf7" stroke-width="2"/><path d="M24 14l6 0-3 4.500z" fill="#f4faf7"/></g>
 <g transform="translate(1142,783)"><rect width="32" height="32" rx="6" fill="#f2f2f2"/><rect x="3" y="3" width="26" height="26" rx="3" fill="#9fc0e0"/><path d="M3 21c8-4 14 0 26-2v7a3 3 0 0 1-3 3H6a3 3 0 0 1-3-3z" fill="#e6e6e2"/><rect x="17" y="17" width="14" height="14" rx="2" fill="#333"/><rect x="19" y="14" width="10" height="4" rx="1" fill="#222"/><path d="M18 25h12v6H18z" fill="#c9ccd0"/></g>
 <g transform="translate(1207,780)"><path d="M1 6h26l-3 29c-.2 1.500-1 2-2 2H6c-1 0-1.800-.5-2-2z" fill="#e8e6ea"/><ellipse cx="14" cy="6" rx="14" ry="4.500" fill="#c9c5cf"/><circle cx="8" cy="4" r="2" fill="#5d86b8"/><circle cx="14" cy="3" r="2" fill="#c35f5f"/><circle cx="20" cy="4" r="2" fill="#5aa27a"/></g>
 <g fill="#3a2f55"><circle cx="60" cy="824" r="1.500"/><circle cx="189" cy="824" r="1.500"/><circle cx="232" cy="824" r="1.500"/><circle cx="275" cy="824" r="1.500"/><circle cx="318" cy="824" r="1.500"/><circle cx="577" cy="824" r="1.500"/><circle cx="707" cy="824" r="1.500"/><circle cx="1009" cy="824" r="1.500"/><circle cx="1072" cy="824" r="1.500"/></g>
</svg>
</div>
</body></html>
